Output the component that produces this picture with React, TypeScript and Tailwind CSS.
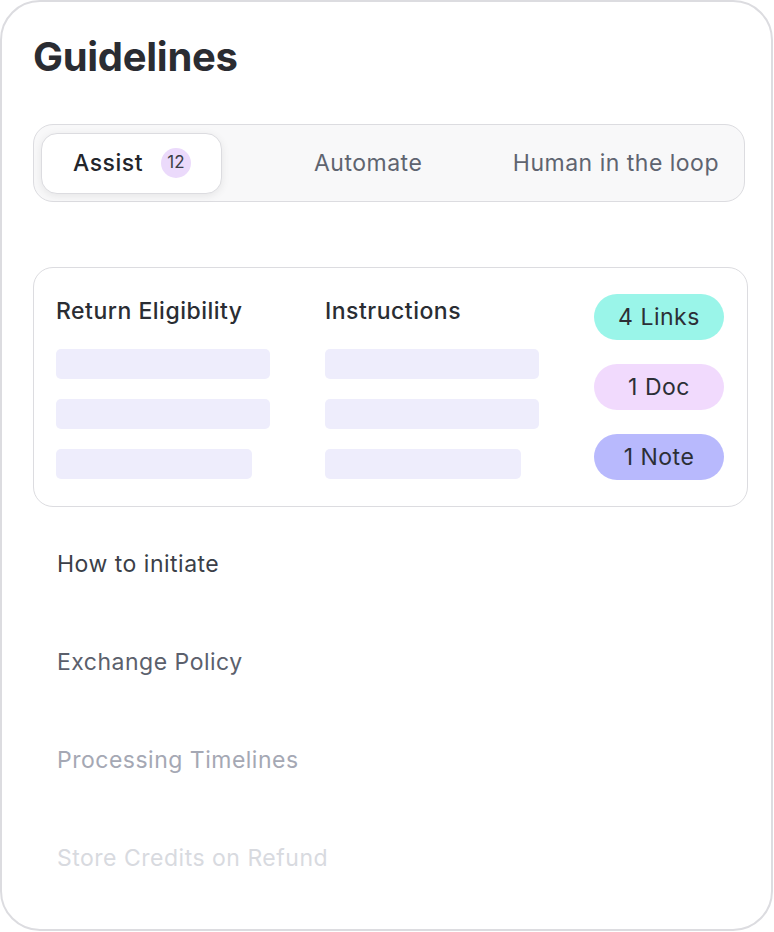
import React from 'react';

const tabs = ['Automate', 'Human in the loop'];

const bars = ['w-[214px]', 'w-[214px]', 'w-[196px]'];

const chips = [
  { label: '4 Links', bg: 'bg-[#9af5e9]' },
  { label: '1 Doc', bg: 'bg-[#f1dafd]' },
  { label: '1 Note', bg: 'bg-[#b8b9fd]' },
];

const topics = [
  { label: 'How to initiate', color: 'text-[#3b3f48]' },
  { label: 'Exchange Policy', color: 'text-[#5b606c]' },
  { label: 'Processing Timelines', color: 'text-[#a5a8b4]' },
  { label: 'Store Credits on Refund', color: 'text-[#d8dadf]' },
];

function Column({ title }: { title: string }) {
  return (
    <div className="flex flex-col">
      <h4 className="text-[23px] leading-[28px] tracking-[0.5px] font-medium text-[#2a2d33]">{title}</h4>
      <div className="mt-[24px] flex flex-col gap-[20px]">
        {bars.map((w, i) => (
          <div key={i} className={`${w} h-[30px] rounded-[5px] bg-[#eeedfc]`} />
        ))}
      </div>
    </div>
  );
}

export default function App() {
  return (
    <div className="w-[774px] h-[932px] bg-white" style={{ fontFamily: 'Inter, "Noto Sans", sans-serif' }}>
      <div className="w-[773px] h-[931px] rounded-[40px] border-2 border-[#dcdce0] bg-white px-[31px] pt-[31px] flex flex-col">
        <h1 className="text-[40px] leading-[48px] font-bold text-[#2a2c32] tracking-[-0.3px]">Guidelines</h1>

        <div className="mt-[43px] w-[712px] h-[78px] rounded-[20px] border-[1.5px] border-[#dcdce0] bg-[#f8f8f9] flex items-center px-[7px]">
          <div className="h-[61px] w-[181px] rounded-[16px] bg-white border-[1.5px] border-[#dcdce0] shadow-[0_2px_8px_rgba(0,0,0,0.08)] flex items-center pl-[31px] gap-[18px]">
            <span className="text-[23px] tracking-[0.5px] font-medium text-[#23252b]">Assist</span>
            <span className="w-[30px] h-[30px] rounded-full bg-[#ebdafb] text-[17px] text-[#3a3d45] flex items-center justify-center">12</span>
          </div>
          <div className="flex-1 flex items-center justify-between pl-[92px] pr-[18px]">
            {tabs.map((t) => (
              <span key={t} className="text-[23px] tracking-[0.5px] text-[#5f6470]">{t}</span>
            ))}
          </div>
        </div>

        <div className="mt-[65px] w-[715px] rounded-[20px] border-[1.5px] border-[#dcdce0] pl-[22px] pr-[23px] pt-[26px] pb-[26px] flex">
          <div className="flex gap-[55px] pt-[3px]">
            <Column title="Return Eligibility" />
            <Column title="Instructions" />
          </div>
          <div className="ml-auto flex flex-col gap-[24px]">
            {chips.map((c) => (
              <div key={c.label} className={`w-[130px] h-[46px] rounded-full ${c.bg} flex items-center justify-center text-[23px] tracking-[0.5px] text-[#2c2f36]`}>
                {c.label}
              </div>
            ))}
          </div>
        </div>

        <div className="mt-[42px] pl-[24px] flex flex-col gap-[68px]">
          {topics.map((t) => (
            <div key={t.label} className={`text-[23px] leading-[30px] tracking-[0.5px] ${t.color}`}>{t.label}</div>
          ))}
        </div>
      </div>
    </div>
  );
}
